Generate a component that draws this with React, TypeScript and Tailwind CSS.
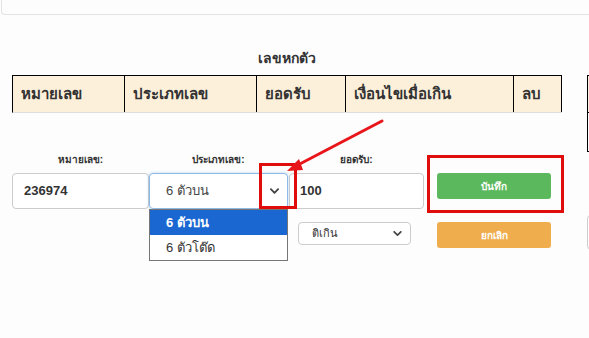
import React from 'react';

const headers = [
  { label: 'หมายเลข', w: 'w-[112px]' },
  { label: 'ประเภทเลข', w: 'w-[132px]' },
  { label: 'ยอดรับ', w: 'w-[89px]' },
  { label: 'เงื่อนไขเมื่อเกิน', w: 'w-[168px]' },
  { label: 'ลบ', w: 'w-[48px]' },
];

function Chevron({ className = '' }: { className?: string }) {
  return (
    <svg viewBox="0 0 10 6" className={className} aria-hidden>
      <path d="M1 1l4 4 4-4" fill="none" stroke="currentColor" strokeWidth="2" strokeLinecap="round" strokeLinejoin="round" />
    </svg>
  );
}

export default function App() {
  return (
    <div className="relative h-[338px] w-[589px] overflow-hidden bg-[#fdfdfd] text-[#333] font-['Liberation_Sans',Tahoma,'Noto_Sans',sans-serif]">
      {/* top panel edge */}
      <div className="ml-[1px] h-[15px] w-[620px] rounded-bl-[4px] border-b border-l border-[#e3e3e3]" />

      {/* title */}
      <div className="mt-[33px] flex w-[573px] justify-center">
        <h3 className="text-[14px] font-bold leading-[20px] text-[#333]">เลขหกตัว</h3>
      </div>

      {/* tables */}
      <div className="mt-[7px] flex items-start gap-[25px] pl-[12px]">
        <div className="flex shrink-0 border-b border-b-[#ddd] border-t border-t-black border-l border-l-black">
          {headers.map((h) => (
            <div
              key={h.label}
              className={`${h.w} flex h-[36px] shrink-0 items-center border-r border-black bg-[#fdf0da] px-[8px] text-[15px] font-bold text-[#333]`}
            >
              {h.label}
            </div>
          ))}
        </div>
        <div className="w-[100px] shrink-0 border border-black">
          <div className="h-[37px] border-b border-black bg-[#fdf0da]" />
          <div className="h-[38px]" />
        </div>
      </div>

      {/* form row */}
      <div className="flex items-start pl-[12px]">
        <div className="w-[137px] shrink-0">
          <div className="h-[16px] text-center text-[10px] font-bold leading-[16px] text-[#333]">หมายเลข:</div>
          <div className="mt-[5px] flex h-[36px] items-center rounded-[4px] border border-[#ccc] bg-white pl-[11px] text-[13px] font-bold text-[#333]">
            236974
          </div>
        </div>

        <div className="relative w-[139px] shrink-0">
          <div className="h-[16px] text-center text-[10px] font-bold leading-[16px] text-[#333]">ประเภทเลข:</div>
          <div className="mt-[5px] flex h-[36px] items-center justify-between rounded-[4px] border border-[#8fb8e6] bg-white pl-[16px] pr-[8px] text-[13px] text-[#444] shadow-[0_0_3px_rgba(102,175,233,0.5)]">
            <span>6 ตัวบน</span>
            <Chevron className="h-[6px] w-[9px] text-[#444]" />
          </div>
          <div className="absolute left-0 top-[57px] w-[139px] border border-[#767676] bg-white text-[13px]">
            <div className="flex h-[25px] items-center bg-[#1a67d2] pl-[16px] font-bold text-white">6 ตัวบน</div>
            <div className="flex h-[25px] items-center pl-[16px] text-[#333]">6 ตัวโต๊ด</div>
          </div>
        </div>

        <div className="ml-[1px] w-[135px] shrink-0">
          <div className="h-[16px] text-center text-[10px] font-bold leading-[16px] text-[#333]">ยอดรับ:</div>
          <div className="mt-[5px] flex h-[36px] items-center rounded-[4px] border border-[#ccc] bg-white pl-[10px] text-[13px] font-bold text-[#333]">
            100
          </div>
          <div className="ml-[9px] mt-[13px] flex h-[23px] w-[113px] items-center justify-between rounded-[4px] border border-[#ccc] bg-white pl-[13px] pr-[8px] text-[11px] text-[#333]">
            <span>ติเกิน</span>
            <Chevron className="h-[5px] w-[9px] text-[#444]" />
          </div>
        </div>

        <div className="ml-[13px] mt-[21px] flex w-[114px] shrink-0 flex-col gap-[23px]">
          <button className="h-[26px] rounded-[3px] bg-[#5cb85c] text-[10px] font-bold text-white">บันทึก</button>
          <button className="h-[26px] rounded-[3px] bg-[#f0ad4e] text-[10px] font-bold text-white">ยกเลิก</button>
        </div>

        <div className="ml-[36px] mt-[63px] h-[35px] w-[80px] shrink-0 rounded-[4px] border border-[#ccc] bg-white" />
      </div>

      {/* annotations */}
      <div className="pointer-events-none absolute left-[259px] top-[163px] h-[46px] w-[38px] border-[3px] border-[#e00d0d]" />
      <div className="pointer-events-none absolute left-[427px] top-[155px] h-[58px] w-[137px] border-[3px] border-[#e00d0d]" />
      <svg className="pointer-events-none absolute left-0 top-0" width="589" height="338" aria-hidden>
        <line x1="382" y1="121" x2="294" y2="167" stroke="#e8161b" strokeWidth="3" strokeLinecap="round" />
        <polygon points="287,171 299,159 303,170" fill="#e8161b" />
      </svg>
    </div>
  );
}
